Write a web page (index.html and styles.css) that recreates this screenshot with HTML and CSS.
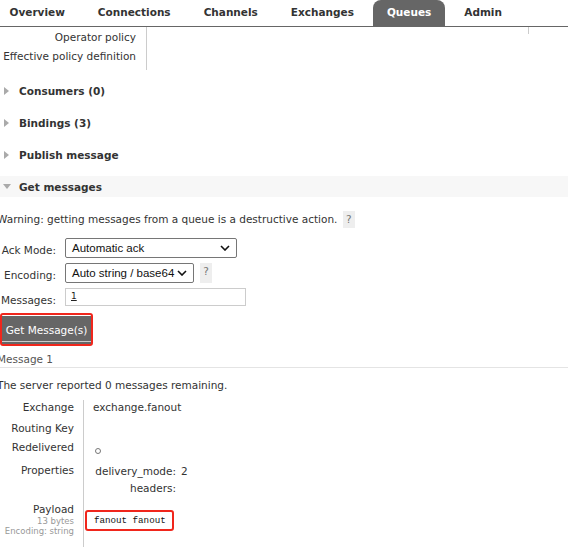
FILE: index.html
```html
<!DOCTYPE html>
<html lang="en">
<head>
    <meta charset="UTF-8">
    <title>Queues</title>
    <link rel="stylesheet" href="styles.css">
</head>
<body>
    <nav class="tabs">
        <a href="#">Overview</a>
        <a href="#">Connections</a>
        <a href="#">Channels</a>
        <a href="#">Exchanges</a>
        <a href="#" class="selected">Queues</a>
        <a href="#">Admin</a>
    </nav>

    <div class="policy">
        <div class="policy-labels">
            <div>Operator policy</div>
            <div>Effective policy definition</div>
        </div>
        <div class="policy-values"></div>
    </div>

    <div class="section"><h2 class="toggle">Consumers (0)</h2></div>
    <div class="section"><h2 class="toggle">Bindings (3)</h2></div>
    <div class="section"><h2 class="toggle">Publish message</h2></div>

    <div class="section open">
        <h2 class="toggle">Get messages</h2>
        <div class="section-body">
            <p class="warning">Warning: getting messages from a queue is a destructive action. <span class="help">?</span></p>

            <div class="fields">
                <label>Ack Mode:</label>
                <div class="select ack">Automatic ack
                    <svg class="chevron" width="10" height="6" viewBox="0 0 10 6"><path d="M1 1l4 4 4-4" fill="none" stroke="#111" stroke-width="1.6"/></svg>
                </div>

                <label>Encoding:</label>
                <div class="row">
                    <div class="select enc">Auto string / base64
                        <svg class="chevron" width="10" height="6" viewBox="0 0 10 6"><path d="M1 1l4 4 4-4" fill="none" stroke="#111" stroke-width="1.6"/></svg>
                    </div>
                    <span class="help">?</span>
                </div>

                <label>Messages:</label>
                <div class="input">1</div>
            </div>

            <div class="marked">
                <button class="btn">Get Message(s)</button>
            </div>

            <h3 class="msg-title">Message 1</h3>
            <p class="remaining">The server reported 0 messages remaining.</p>

            <div class="details">
                <div class="th h-ex">Exchange</div>
                <div class="td h-ex">exchange.fanout</div>

                <div class="th h-rk">Routing Key</div>
                <div class="td h-rk"></div>

                <div class="th h-rd">Redelivered</div>
                <div class="td h-rd"><span class="dot"></span></div>

                <div class="th h-pr">Properties</div>
                <div class="td h-pr">
                    <div class="props">
                        <span class="key">delivery_mode:</span><span>2</span>
                        <span class="key">headers:</span><span></span>
                    </div>
                </div>

                <div class="th h-pl">
                    Payload
                    <sub>13 bytes</sub>
                    <sub>Encoding: string</sub>
                </div>
                <div class="td h-pl">
                    <pre class="payload">fanout fanout</pre>
                </div>
            </div>
        </div>
    </div>
</body>
</html>
```

FILE: styles.css
```css
body {
    margin: 0;
    font-family: "DejaVu Sans", Verdana, sans-serif;
    font-size: 10.5px;
    color: #333;
    background: #fff;
    overflow: hidden;
}

/* top menu */
.tabs {
    display: flex;
    gap: 6px;
    margin-left: -4px;
    height: 26px;
    border-bottom: 1px solid #666;
}

.tabs a {
    padding: 0 13.5px;
    line-height: 25px;
    font-weight: bold;
    color: #333;
    text-decoration: none;
}

.tabs a.selected {
    background-color: #666;
    color: #fff;
    border-radius: 8px 8px 0 0;
}

/* policy rows */
.policy {
    display: flex;
    margin-bottom: 10px;
}

.policy-labels {
    width: 147px;
    padding: 3px 10px 2px 0;
    box-sizing: border-box;
    border-right: 1px solid #ccc;
    text-align: right;
}

.policy-labels div {
    line-height: 14px;
    padding-bottom: 5px;
}

.policy-values {
    width: 381px;
    height: 7px;
    border-right: 1px solid #ccc;
}

/* collapsible sections */
.toggle {
    display: flex;
    align-items: center;
    margin: 0 0 11px;
    height: 21px;
    padding-left: 4px;
    font-size: 10.5px;
    font-weight: bold;
    color: #333;
}

.toggle::before {
    content: "";
    width: 0;
    height: 0;
    margin-right: 10px;
    border-left: 5px solid #aaa;
    border-top: 4px solid transparent;
    border-bottom: 4px solid transparent;
}

.open .toggle {
    background-color: #f7f7f7;
    padding-left: 3px;
    margin-bottom: 14px;
}

.open .toggle::before {
    margin-right: 8px;
    border-left: 4px solid transparent;
    border-right: 4px solid transparent;
    border-top: 5px solid #aaa;
    border-bottom: 0;
}

.section-body {
    margin-left: -3px;
}

.warning {
    margin: 0;
    line-height: 17px;
}

.help {
    display: inline-block;
    width: 12px;
    margin-left: 2px;
    line-height: 17px;
    text-align: center;
    background-color: #eee;
    color: #777;
}

/* form */
.fields {
    display: grid;
    grid-template-columns: 59px auto;
    column-gap: 9px;
    row-gap: 5px;
    margin-top: 10px;
    justify-items: start;
}

.fields label {
    justify-self: end;
    padding-top: 5px;
    line-height: 14px;
}

.row {
    display: flex;
    gap: 4px;
}

.select {
    position: relative;
    height: 20px;
    box-sizing: border-box;
    padding-left: 6px;
    border: 1px solid #767676;
    border-radius: 2px;
    font-family: "Liberation Sans", Arial, sans-serif;
    font-size: 11.5px;
    line-height: 18px;
    color: #111;
}

.select.ack { width: 172px; }
.select.enc { width: 129px; }

.chevron {
    position: absolute;
    right: 6px;
    top: 6px;
}

.input {
    width: 181px;
    height: 18px;
    box-sizing: border-box;
    padding-left: 5px;
    border: 1px solid #ccc;
    font-size: 9px;
    line-height: 14px;
    color: #222;
    text-decoration: underline;
}

.marked {
    display: inline-block;
    margin: 6px 0 0 3px;
    padding-top: 1px;
    border: 2px solid #f0261c;
    border-radius: 3px;
}

.btn {
    display: block;
    width: 89px;
    height: 28px;
    padding: 0;
    border: none;
    background-color: #666;
    box-shadow: inset 0 -2px 0 #666, inset 0 -3px 0 #ccc;
    font-family: "DejaVu Sans", Verdana, sans-serif;
    font-size: 10.5px;
    color: #fff;
}

/* message details */
.msg-title {
    margin: 6px 0 0;
    padding-bottom: 1px;
    font-size: 10.5px;
    font-weight: normal;
    line-height: 14px;
    color: #555;
    border-bottom: 1px solid #e4e4e4;
}

.remaining {
    margin: 10px 0 8px;
    line-height: 14px;
}

.details {
    display: grid;
    grid-template-columns: 87px 1fr;
    line-height: 14px;
}

.th {
    padding-right: 9px;
    text-align: right;
    border-right: 1px solid #ccc;
}

.td {
    padding-left: 9px;
}

.h-ex { height: 21px; }
.h-rk { height: 19px; }
.h-rd { height: 23px; }
.h-pr { height: 39px; }
.h-pl { height: 50px; }

.th sub {
    display: block;
    font-size: 8.5px;
    line-height: 10px;
    color: #999;
    vertical-align: baseline;
}

.dot {
    display: inline-block;
    width: 4px;
    height: 4px;
    margin: 8px 0 0 2px;
    border: 1px solid #777;
    border-radius: 50%;
}

.props {
    display: grid;
    grid-template-columns: 83px auto;
    column-gap: 5px;
    row-gap: 3px;
    padding-top: 1px;
}

.props .key {
    text-align: right;
}

.td.h-pl {
    padding-left: 1px;
}

.payload {
    display: inline-block;
    margin: 8px 0 0;
    padding: 0 6px 0 7px;
    border: 2px solid #f0261c;
    border-radius: 3px;
    font-family: "Liberation Mono", "Courier New", monospace;
    font-size: 9.2px;
    line-height: 17px;
    color: #111;
}
```
